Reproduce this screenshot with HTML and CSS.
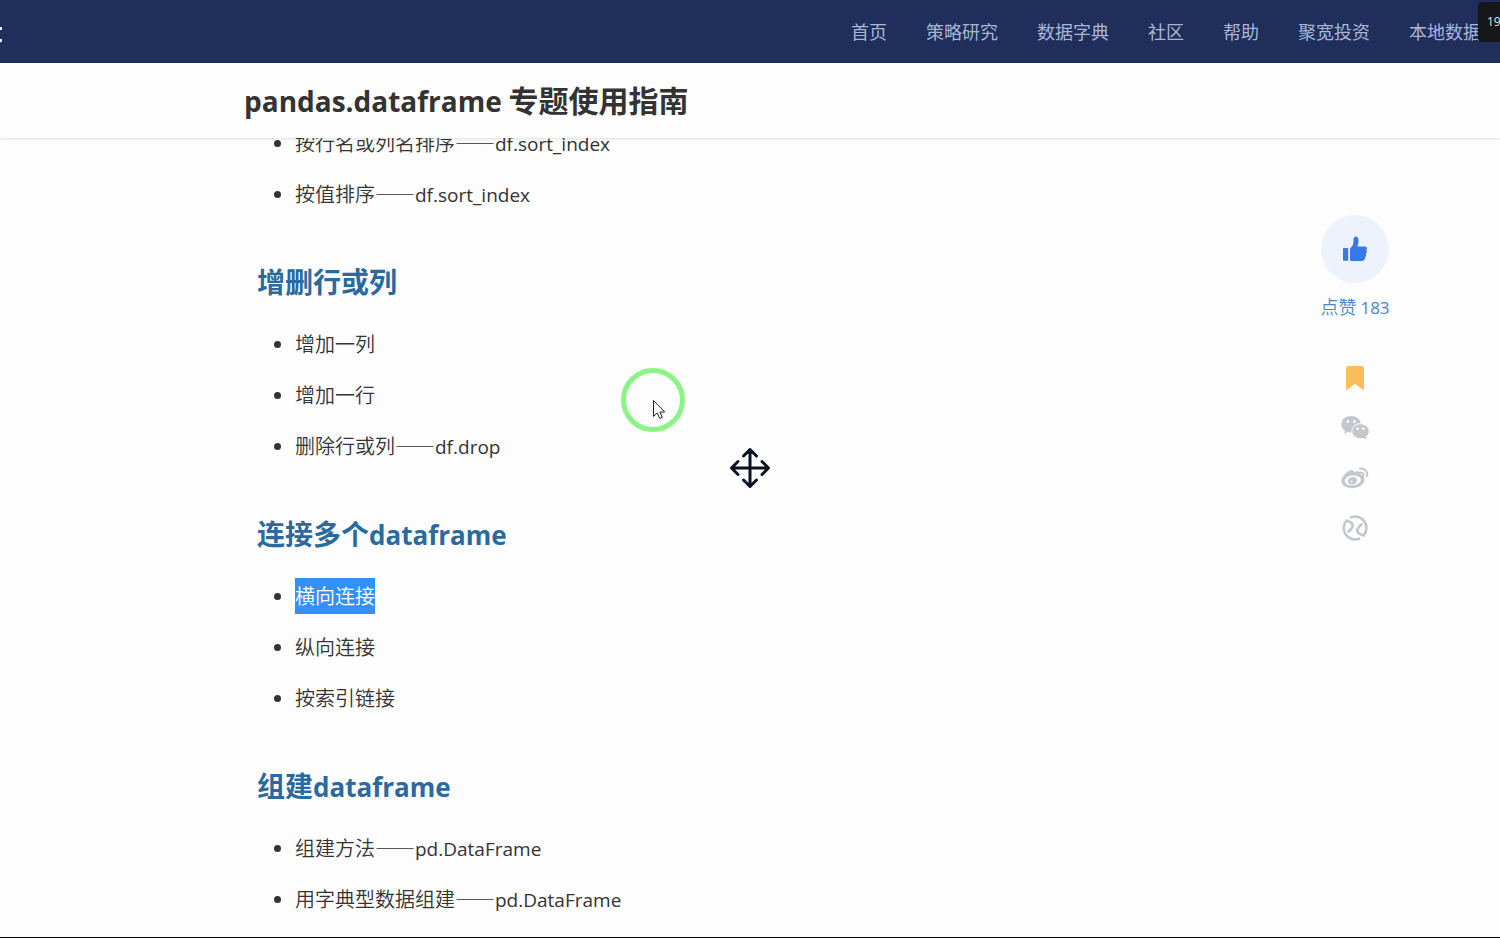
FILE: index.html
```html
<!DOCTYPE html>
<html lang="zh-CN">
<head>
<meta charset="utf-8">
<title>pandas.dataframe 专题使用指南</title>
<link rel="stylesheet" href="styles.css">
</head>
<body>
<header class="topbar">
  <svg class="logo-end" width="3" height="18" viewBox="0 0 3 18" aria-hidden="true"><path d="M0 0h2v3H0zM0 12h2v2.500l-.8.800H0z"/></svg>
  <nav class="nav">
    <a href="#">首页</a>
    <a href="#">策略研究</a>
    <a href="#">数据字典</a>
    <a href="#">社区</a>
    <a href="#">帮助</a>
    <a href="#">聚宽投资</a>
    <a href="#">本地数据</a>
  </nav>
  <div class="counter">19</div>
</header>
<div class="titlebar"><h1><span class="latin">pandas.dataframe</span> 专题使用指南</h1></div>
<main class="main">
  <article class="article">
    <ul>
      <li>按行名或列名排序——<span class="latin">df.sort_index</span></li>
      <li>按值排序——<span class="latin">df.sort_index</span></li>
    </ul>
    <h2>增删行或列</h2>
    <ul>
      <li>增加一列</li>
      <li>增加一行</li>
      <li>删除行或列——<span class="latin">df.drop</span></li>
    </ul>
    <h2>连接多个<span class="latin">dataframe</span></h2>
    <ul>
      <li><mark>横向连接</mark></li>
      <li>纵向连接</li>
      <li>按索引链接</li>
    </ul>
    <h2>组建<span class="latin">dataframe</span></h2>
    <ul>
      <li>组建方法——<span class="latin">pd.DataFrame</span></li>
      <li>用字典型数据组建——<span class="latin">pd.DataFrame</span></li>
    </ul>
  </article>
  <aside class="actions">
    <button class="like" type="button" aria-labelledby="like-text">
      <svg width="26" height="26" viewBox="0 0 26 26"><path d="M2 12h3.500q.7 0 .7.700V24q0 .8-.7.800H2q-1 0-1-1V13q0-1 1-1z"/><path d="M8 24V13q0-1 1-1.600 2.500-1.700 2.500-5.400V3q0-2.500 2-2.500 3 0 3 4.500 0 3-1 5.500H23q2 0 2 2 0 1.300-.8 1.800.8.700.6 2-.2 1.100-1 1.600.5.700.2 1.800-.2 1-1 1.500.3 1-.2 1.900-.7 1.900-3 1.900H9.500Q8 25 8 24z"/></svg>
    </button>
    <span class="like-text" id="like-text">点赞 <span class="latin">183</span></span>
    <div class="icons">
      <button type="button" class="icon mark" aria-label="收藏">
        <svg width="28" height="28" viewBox="0 0 28 28"><path d="M7.500 2h13Q23 2 23 4.500V25q0 1.400-1.200.600L14 20l-7.800 5.600Q5 26.400 5 25V4.500Q5 2 7.500 2z"/></svg>
      </button>
      <button type="button" class="icon" aria-label="微信">
        <svg width="28" height="28" viewBox="0 0 28 28"><path fill-rule="evenodd" d="M10 2C4.500 2 .3 5.600.3 10.300c0 2.700 1.400 5 3.700 6.500L3 20l3.600-1.900c1.200.4 2.500.5 3.800.4-.3-5.300 4.300-9.600 9.600-9.400C19 4.800 15 2 10 2zM6.800 6a1.500 1.500 0 1 1 0 3 1.500 1.500 0 0 1 0-3zm6.600 0a1.500 1.500 0 1 1 0 3 1.500 1.500 0 0 1 0-3z"/><path fill-rule="evenodd" d="M19.500 10.300c4.700 0 8.300 3.100 8.300 7 0 2.200-1.200 4.100-3 5.400l.7 2.800-3-1.600c-1 .3-2 .4-3 .4-4.600 0-8.200-3.100-8.200-7s3.600-7 8.200-7zm-2.900 3.200a1.300 1.300 0 1 0 0 2.600 1.300 1.300 0 0 0 0-2.600zm5.700 0a1.300 1.300 0 1 0 0 2.600 1.300 1.300 0 0 0 0-2.600z"/></svg>
      </button>
      <button type="button" class="icon" aria-label="微博">
        <svg width="28" height="28" viewBox="0 0 28 28"><path fill-rule="evenodd" d="M9.500 6.200c2-.6 3.200.1 3.200 1.800 2.800-1.200 7-1.300 6.800 1.800-.1.800.2 1 1 1.300 2 .7 3.300 2 3.100 4.100-.4 5.100-6.200 9-12.600 9C5.200 24.200.4 21.600.4 17.100.4 13 5.300 7.500 9.500 6.200zm2.300 5.300c-4.300 0-8 2.400-8 5.500 0 2.700 3.100 4.300 7.200 4.300 4.800 0 8.800-2.600 8.800-5.600 0-2.600-3.400-4.200-8-4.200z"/><path fill-rule="evenodd" d="M11.800 13c3 0 4.500 1.500 4.100 3.700-.4 2.300-2.900 4-5.500 3.700-2.500-.2-3.900-1.800-3.500-3.700.5-2.200 2.600-3.700 4.900-3.700zm-1.200 3.400a1 1 0 1 0 .1 2 1 1 0 0 0-.1-2z"/><path d="M19 4.800c4.600-1.100 8.200 3 6.900 7.300M19.500 8.800c2-.5 3.400 1 2.900 2.700" fill="none" stroke="currentColor" stroke-width="2" stroke-linecap="round"/></svg>
      </button>
      <button type="button" class="icon" aria-label="分享">
        <svg width="28" height="28" viewBox="0 0 28 28" fill="none" stroke="currentColor" stroke-width="2.600" stroke-linecap="round" stroke-linejoin="round"><path d="M10 3.200A11.400 11.400 0 0 1 22.500 21.500M18 24.700A11.400 11.400 0 0 1 4.700 20.600M4.700 20.600A11.400 11.400 0 0 1 5.500 6.500C8 7.300 11.700 8.500 11.700 11.500c0 2-1.700 4-4.200 6M22.500 21.500c-2.500-.8-6.200-2-6.200-5 0-2 1.700-4 4.200-6"/></svg>
      </button>
    </div>
  </aside>
</main>
<div class="ring"></div>
<svg class="pointer" width="14" height="21" viewBox="0 0 14 21" aria-hidden="true"><path d="M1.500 1.500v16l3.700-3.500 2.600 5.500 2.500-1.200-2.500-5.200 4.900-.2z"/></svg>
<svg class="move" width="42" height="42" viewBox="0 0 42 42" aria-hidden="true"><path d="M21 2.500v37M2.500 21h37M14.500 9L21 2.500 27.500 9M14.500 33l6.500 6.500 6.500-6.500M9 14.500L2.500 21 9 27.500M33 14.500l6.500 6.500-6.500 6.500"/></svg>
</body>
</html>
```
FILE: styles.css
```css
* { box-sizing: border-box; }
body {
  margin: 0;
  height: 100vh;
  display: flex;
  flex-direction: column;
  overflow: hidden;
  position: relative;
  background: #fdfdfd;
  border-bottom: 1px solid #000;
  color: #333;
  font-family: "Noto Sans CJK SC", sans-serif;
}
.latin { font-family: "Open Sans", "Noto Sans", sans-serif; line-height: 1; }
.topbar {
  position: relative;
  flex: none;
  display: flex;
  align-items: center;
  justify-content: space-between;
  height: 63px;
  padding-bottom: 2px;
  background: #1f2e5b;
}
.logo-end { fill: #e9f1fa; margin-top: 10px; }
.nav { display: flex; gap: 39px; padding-right: 19px; }
.nav a {
  color: #a9b6d6;
  font-size: 18px;
  line-height: 28px;
  text-decoration: none;
  white-space: nowrap;
}
.counter {
  position: absolute;
  top: 2px;
  right: 0;
  width: 22px;
  height: 40px;
  padding-left: 9px;
  overflow: hidden;
  border-radius: 4px 0 0 4px;
  background: #15171b;
  color: #e4e4e4;
  font-family: "Open Sans", sans-serif;
  font-size: 12px;
  line-height: 40px;
}
.titlebar {
  position: relative;
  z-index: 1;
  flex: none;
  height: 75px;
  padding-left: 244px;
  background: #fdfdfd;
  box-shadow: 0 1px 3px rgba(0, 0, 0, .12);
}
.titlebar h1 { margin: 0; font-size: 30px; line-height: 73px; font-weight: 700; }
.titlebar .latin { font-size: 28px; }
.main {
  flex: 1;
  min-height: 0;
  display: flex;
  justify-content: space-between;
  padding: 0 90px 0 257px;
}
.article { margin-top: -13px; }
.article ul { margin: 0; padding-left: 38px; }
.article li {
  margin-bottom: 15px;
  font-size: 20px;
  line-height: 36px;
  font-weight: 350;
}
.article li::marker { font-family: "Noto Sans"; }
.article li .latin { font-size: 19px; font-weight: 400; }
.article h2 {
  margin: 49px 0 25px;
  color: #2b6a9e;
  font-size: 28px;
  line-height: 40px;
  font-weight: 700;
}
.article h2 .latin { font-size: 26px; }
.article mark {
  display: block;
  width: max-content;
  background: #3390f8;
  color: #fff;
}
.actions {
  display: flex;
  flex-direction: column;
  align-items: center;
  width: 110px;
  padding-top: 77px;
}
button { padding: 0; border: 0; background: none; }
button svg { display: block; fill: currentColor; }
.actions .like {
  display: grid;
  place-items: center;
  width: 68px;
  height: 68px;
  border-radius: 50%;
  background: #edf2fd;
  color: #3b78e7;
}
.like-text { margin-top: 9px; color: #4a85c9; font-size: 18px; line-height: 28px; font-weight: 350; }
.like-text .latin { font-size: 17px; font-weight: 400; }
.icons { display: flex; flex-direction: column; gap: 22px; margin-top: 44px; }
.icon { color: #c3c8ce; }
.icon:last-child svg { fill: none; }
.icons .mark { color: #fcbd5c; }
.ring {
  position: absolute;
  left: 621px;
  top: 368px;
  width: 64px;
  height: 64px;
  border: 5px solid #8cf487;
  border-radius: 50%;
}
.pointer { position: absolute; left: 652px; top: 399px; fill: #fff; stroke: #222; }
.move {
  position: absolute;
  left: 729px;
  top: 447px;
  fill: none;
  stroke: #07131f;
  stroke-width: 3;
  stroke-linecap: round;
  stroke-linejoin: round;
}
```
